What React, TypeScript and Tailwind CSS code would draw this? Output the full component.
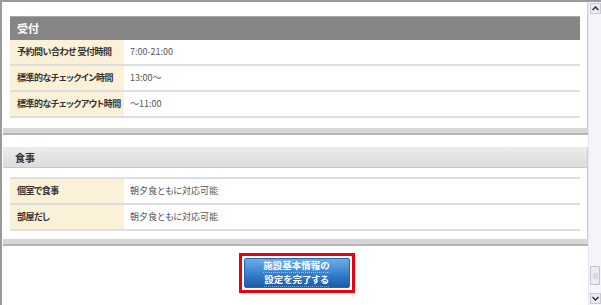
import React from "react";

const jp = { fontFamily: '"Noto Sans CJK JP", "Noto Sans", sans-serif' };

function Row({ label, value }: { label: string; value: string }) {
  return (
    <div className="flex h-[26px] border-b-2 border-[#dedede]">
      <div className="w-[114px] bg-[#fbf1d8] flex items-center pl-[7px] text-[9px] font-bold text-[#333] whitespace-nowrap [font-feature-settings:'palt'] tracking-[-0.5px]">{label}</div>
      <div className="flex-1 flex items-center pl-[6px] text-[9px] text-[#555] whitespace-nowrap [font-feature-settings:'palt']">{value}</div>
    </div>
  );
}

export default function App() {
  return (
    <div style={jp} className="w-[601px] h-[305px] overflow-hidden bg-white flex border-t-2 border-l-2 border-[#9a9a9a]">
      <div className="flex-1 flex flex-col pl-[1px]">
        {/* panel 1 */}
        <div className="border-r border-[#cfcfcf] bg-white pt-[14px]">
          <div className="mx-[7px]">
            <div className="h-[24px] bg-[#858585] border-t border-[#a8a8a8] flex items-center pl-[7px] text-[11px] font-bold text-white">受付</div>
            <Row label="予約問い合わせ 受付時間" value="7:00-21:00" />
            <Row label="標準的なチェックイン時間" value="13:00〜" />
            <Row label="標準的なチェックアウト時間" value="〜11:00" />
          </div>
          <div className="h-[10px]" />
        </div>
        <div className="h-[7px] bg-[#d6d6d6] border-b-2 border-[#b5b5b5]" />
        <div className="h-[12px]" />
        {/* panel 2 */}
        <div className="border-r border-[#cfcfcf] bg-white">
          <div className="h-[21px] bg-gradient-to-b from-[#ececec] to-[#dcdcdc] border-b border-[#c8c8c8] flex items-center pl-[12px] text-[10px] font-bold text-[#333]">食事</div>
          <div className="mx-[7px] mt-[9px] border-t-2 border-[#dedede]">
            <Row label="個室で食事" value="朝夕食ともに対応可能" />
            <Row label="部屋だし" value="朝夕食ともに対応可能" />
          </div>
          <div className="h-[8px]" />
        </div>
        <div className="h-[7px] bg-[#d6d6d6] border-b-2 border-[#b5b5b5]" />
        <div className="flex justify-center pt-[7px] pl-[2px]">
          <div className="border-[3px] border-[#e60012] p-[2px]">
            <div className="w-[106px] h-[30px] rounded-[2px] bg-gradient-to-b from-[#6aaee6] via-[#3a82cf] to-[#1d5aa8] border border-[#2a64a8] flex flex-col items-center justify-center text-white text-[9.5px] font-bold leading-[13px] [font-feature-settings:'palt']">
              <span className="border-b border-dotted border-[#9cc4ee]">施設基本情報の</span>
              <span className="border-b border-dotted border-[#7aa6dc]">設定を完了する</span>
            </div>
          </div>
        </div>
      </div>
      {/* scrollbar */}
      <div className="w-[13px] bg-[#f4f5fb] border-l border-[#e6e8f2] flex flex-col items-center">
        <div className="w-[11px] h-[11px] mt-[1px] bg-[#eaeaf0] border border-[#c9c9d6] flex items-center justify-center">
          <svg width="7" height="5" viewBox="0 0 7 5"><path d="M0.5 4 L3.5 1 L6.5 4" stroke="#333" strokeWidth="1.5" fill="none" /></svg>
        </div>
        <div className="flex-1" />
        <div className="w-[10px] h-[19px] bg-[#ececf2] border border-[#c0c0cc] rounded-[1px] flex items-center justify-center">
          <div className="w-[5px] h-[6px] bg-[#d8d8e2]" />
        </div>
        <div className="h-[8px]" />
        <div className="w-[11px] h-[11px] mb-[1px] bg-[#eaeaf0] border border-[#c9c9d6] flex items-center justify-center">
          <svg width="7" height="5" viewBox="0 0 7 5"><path d="M0.5 1 L3.5 4 L6.5 1" stroke="#333" strokeWidth="1.5" fill="none" /></svg>
        </div>
      </div>
    </div>
  );
}
